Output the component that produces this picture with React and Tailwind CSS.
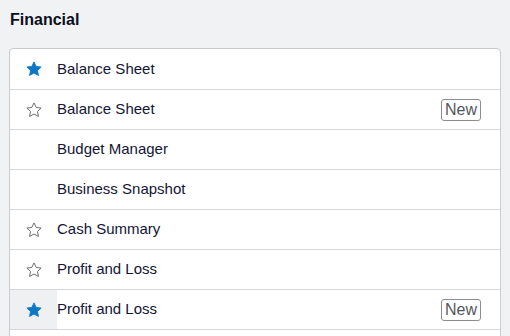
import React from 'react'

const items = [
  { name: 'Balance Sheet', star: 'filled' },
  { name: 'Balance Sheet', star: 'outline', isNew: true },
  { name: 'Budget Manager' },
  { name: 'Business Snapshot' },
  { name: 'Cash Summary', star: 'outline' },
  { name: 'Profit and Loss', star: 'outline' },
  { name: 'Profit and Loss', star: 'filled', isNew: true, hover: true },
]

function Star({ filled }) {
  return (
    <svg width="18" height="18" viewBox="0 0 24 24" aria-hidden="true">
      <path
        d="M12 2.5l2.9 6.1 6.6.8-4.9 4.6 1.3 6.6L12 17.3l-5.9 3.3 1.3-6.6-4.9-4.6 6.6-.8z"
        fill={filled ? '#0b77c5' : 'none'}
        stroke={filled ? '#0b77c5' : '#6b6b6b'}
        strokeWidth={filled ? 1.2 : 1.3}
        strokeLinejoin="round"
      />
    </svg>
  )
}

export default function App() {
  return (
    <div className="h-[336px] overflow-hidden bg-[#f1f2f4] pl-[9px] pr-[9px] font-['Liberation_Sans',Arial,sans-serif]">
      <h2 className="pt-[10px] pl-px text-[16px] leading-[20px] font-bold text-[#0b0f1c]">Financial</h2>
      <div className="mt-[18px] rounded-t-[4px] border border-[#c9cbd0] bg-white">
        {items.map((item, i) => (
          <div
            key={i}
            className={`flex items-center border-b border-[#d5d7db] ${i === 0 ? 'h-[41px]' : 'h-10'}`}
          >
            <div
              className={`flex h-full w-[47px] shrink-0 items-center justify-center pl-px ${item.hover ? 'bg-[#eff0f2]' : ''}`}
            >
              {item.star && <Star filled={item.star === 'filled'} />}
            </div>
            <span className="text-[15px] text-[#131535]">{item.name}</span>
            {item.isNew && (
              <span className="ml-auto mr-[19px] flex h-[22px] items-center rounded-[3px] border border-[#8a8c90] px-[3px] text-[16px] text-[#55575b]">
                New
              </span>
            )}
          </div>
        ))}
        <div className="h-10" />
      </div>
    </div>
  )
}
